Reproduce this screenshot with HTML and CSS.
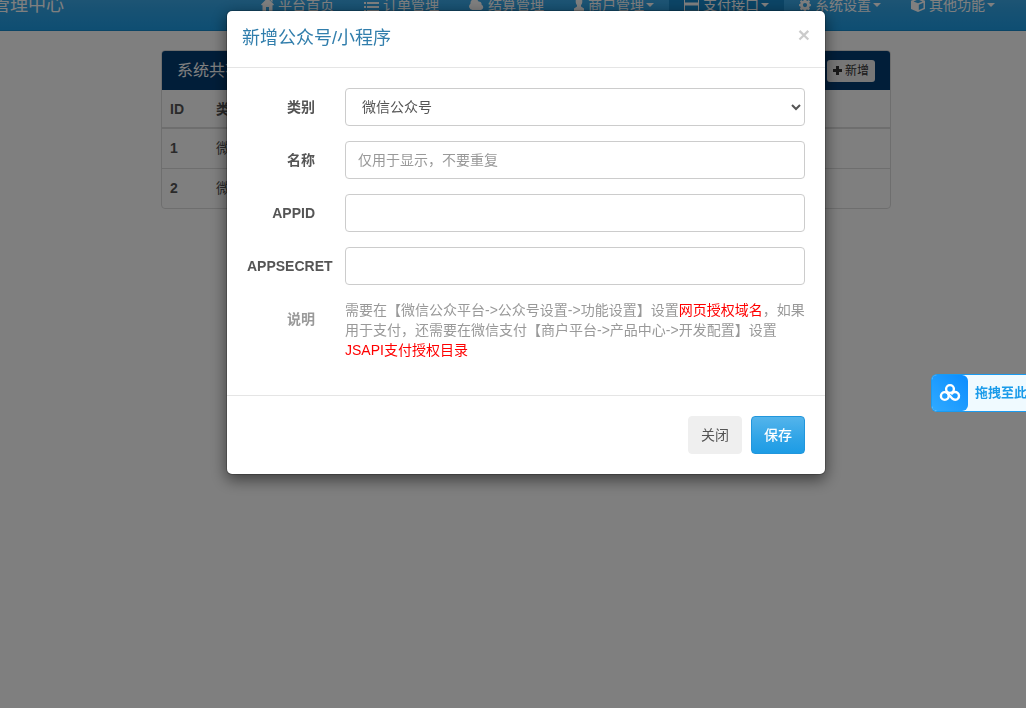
FILE: index.html
```html
<!DOCTYPE html>
<html lang="zh-CN">
<head>
<meta charset="utf-8">
<title>管理中心</title>
<link rel="stylesheet" href="styles.css">
</head>
<body>
<header class="navbar">
  <a class="brand" href="#">管理中心</a>
  <nav class="menu">
    <a href="#"><svg width="13" height="14" viewBox="0 0 13 14"><path d="M6.500 0 13 6.500 12 7.500 11.500 7V13H8V9H5v4H1.500V7L1 7.500 0 6.500ZM9.500 .5H11.500V4.500L9.500 2.500Z"/></svg>平台首页</a>
    <a href="#"><svg width="15" height="14" viewBox="0 0 15 14"><path d="M0 0h2v2H0zM3 0h12v2H3zM0 4h2v2H0zM3 4h12v2H3zM0 8h2v2H0zM3 8h12v2H3zM0 12h2v2H0zM3 12h12v2H3z"/></svg>订单管理</a>
    <a href="#"><svg width="15" height="14" viewBox="0 0 15 14"><path d="M3.500 12A3.500 3.500 0 0 1 1.500 5.700 4.200 4.200 0 0 1 9.500 3.500 2.800 2.800 0 0 1 12.600 6.700 2.800 2.800 0 0 1 12 12Z"/></svg>结算管理</a>
    <a href="#"><svg width="10" height="14" viewBox="0 0 10 14"><path d="M5 0a3.300 3.300 0 0 1 3.300 3.500c0 1.700-.6 3-1.300 3.700V8.500L10 10.500V13H0V10.500L3 8.500V7.200C2.300 6.500 1.700 5.200 1.700 3.500A3.300 3.300 0 0 1 5 0Z"/></svg>商户管理<span class="caret"></span></a>
    <a class="active" href="#"><svg width="15" height="14" viewBox="0 0 15 14"><path fill-rule="evenodd" d="M1 0h13l1 1v12l-1 1H1l-1-1V1ZM1 1.200V4.500h13V1.200ZM1 7.500v5.300h13V7.500Z"/></svg>支付接口<span class="caret"></span></a>
    <a href="#"><svg width="12" height="14" viewBox="0 0 12 14"><path fill-rule="evenodd" d="M5 1h2l.4 1.500 1 .4 1.400-.8 1.300 1.300-.8 1.400.4 1L12 6.200v1.900l-1.500.4-.4 1 .8 1.300-1.300 1.400-1.400-.8-1 .4L7 13.200H5l-.4-1.400-1-.4-1.400.8L.9 10.800l.8-1.300-.4-1L0 8.100V6.200l1.300-.4.4-1-.8-1.400 1.300-1.300 1.400.8 1-.4ZM6 5a2.100 2.100 0 1 0 0 4.200A2.100 2.100 0 0 0 6 5Z"/></svg>系统设置<span class="caret"></span></a>
    <a href="#"><svg width="14" height="14" viewBox="0 0 14 14"><path fill-rule="evenodd" d="M7 0 14 2.800V11L7 14 0 11V2.800ZM7 1.500 2.500 3.400 7 5.300l4.500-1.900ZM7.800 6.700V12l4.700-2.100V4.700Z"/></svg>其他功能<span class="caret"></span></a>
    <a href="#" aria-label="退出"><svg width="14" height="14" viewBox="0 0 14 14"><path d="M7 1a6 6 0 1 0 0 12A6 6 0 1 0 7 1Z"/></svg></a>
  </nav>
</header>

<main class="page">
  <section class="panel">
    <div class="panel-heading">
      <h3>系统共有</h3>
      <button type="button" class="add"><svg width="9" height="9" viewBox="0 0 9 9"><path d="M3 0h3v3h3v3H6v3H3V6H0V3h3Z"/></svg>新增</button>
    </div>
    <table class="list">
      <thead><tr><th class="id">ID</th><th>类别</th></tr></thead>
      <tbody>
        <tr><td class="id">1</td><td>微信</td></tr>
        <tr><td class="id">2</td><td>微信</td></tr>
      </tbody>
    </table>
  </section>
</main>

<div class="backdrop">
  <form class="modal" role="dialog" aria-labelledby="modal-title">
    <div class="modal-header">
      <h4 id="modal-title">新增公众号/小程序</h4>
      <button type="button" class="close" aria-label="关闭窗口">×</button>
    </div>
    <div class="modal-body">
      <div class="row">
        <label for="type">类别</label>
        <div class="field"><select id="type" class="control"><option>微信公众号</option></select></div>
      </div>
      <div class="row">
        <label for="name">名称</label>
        <div class="field"><input id="name" class="control" type="text" placeholder="仅用于显示，不要重复"></div>
      </div>
      <div class="row">
        <label for="appid">APPID</label>
        <div class="field"><input id="appid" class="control" type="text"></div>
      </div>
      <div class="row">
        <label for="secret">APPSECRET</label>
        <div class="field"><input id="secret" class="control" type="text"></div>
      </div>
      <div class="row muted">
        <span class="label">说明</span>
        <p class="field">需要在【微信公众平台-&gt;公众号设置-&gt;功能设置】设置<em>网页授权域名</em>，如果用于支付，还需要在微信支付【商户平台-&gt;产品中心-&gt;开发配置】设置<em>JSAPI支付授权目录</em></p>
      </div>
    </div>
    <div class="modal-footer">
      <button type="button" class="btn">关闭</button>
      <button type="submit" class="btn primary">保存</button>
    </div>
  </form>
</div>

<aside class="drop">
  <span class="drop-icon"><svg width="22" height="20" viewBox="0 0 22 20"><g fill="none" stroke="#fff" stroke-width="2.400" stroke-linecap="round"><circle cx="11" cy="6" r="3.900"/><circle cx="5.800" cy="13" r="3.900"/><path d="M8.500 10 13.400 15.700A3.900 3.900 0 1 0 13 10.500"/></g></svg></span>
  <span class="drop-text">拖拽至此上传</span>
</aside>
</body>
</html>
```
FILE: styles.css
```css
* { box-sizing: border-box; }
body {
  margin: 0;
  overflow: hidden;
  background: #fff;
  color: #555;
  font: 14px/20px "Liberation Sans", "Noto Sans CJK SC", sans-serif;
}
button, input, select { font: inherit; color: inherit; }
h3, h4, p { margin: 0; font-weight: 400; }

.navbar {
  display: flex;
  height: 51px;
  margin-top: -20px;
  background: linear-gradient(#54b4eb, #2fa4e7 60%, #1d9ce5);
  border-bottom: 1px solid #178acc;
}
.navbar a { color: #fff; text-decoration: none; white-space: nowrap; }
.brand {
  flex: none;
  width: 254px;
  margin-left: -8px;
  padding: 15px 0;
  font-size: 18px;
}
.menu { display: flex; }
.menu a { display: flex; align-items: center; padding: 0 15px; }
.menu svg { flex: none; margin-right: 4px; fill: #fff; }
.menu .active { background: #178acc; }
.caret {
  margin-left: 2px;
  border: 4px solid transparent;
  border-top-color: #fff;
  border-bottom: 0;
}

.page { padding: 19px 0 0 26px; }
.panel {
  width: 730px;
  max-width: 100%;
  margin: 0 auto;
  border: 1px solid #ddd;
  border-radius: 4px;
  overflow: hidden;
}
.panel-heading {
  display: flex;
  align-items: center;
  justify-content: space-between;
  height: 39px;
  padding: 0 15px;
  background: #033c73;
  color: #fff;
}
.panel-heading h3 { font-size: 16px; }
.add {
  display: flex;
  align-items: center;
  gap: 3px;
  padding: 1px 6px;
  border: 0;
  border-radius: 3px;
  background: #efefef;
  color: #333;
  font-size: 12px;
}
.add svg { fill: #333; }
.list { width: 100%; border-collapse: collapse; }
.list th, .list td { height: 40px; padding: 8px; text-align: left; border-top: 1px solid #ddd; }
.list th { height: 38px; border-top: 0; border-bottom: 2px solid #ddd; }
.list .id { width: 46px; font-weight: 700; }

.backdrop {
  position: fixed;
  inset: 0;
  padding: 10px 0 0 26px;
  background: rgba(0, 0, 0, .5);
}
.modal {
  width: 600px;
  max-width: 100%;
  margin: 0 auto;
  border: 1px solid rgba(0, 0, 0, .2);
  border-radius: 6px;
  background: #fff;
  background-clip: padding-box;
  box-shadow: 0 5px 15px rgba(0, 0, 0, .5);
}
.modal-header {
  display: flex;
  justify-content: space-between;
  padding: 14px 15px 16px;
  border-bottom: 1px solid #e5e5e5;
}
.modal-header h4 { color: #317eac; font-size: 18px; line-height: 26px; }
.close {
  height: 20px;
  padding: 0;
  border: 0;
  background: none;
  color: #000;
  font-size: 21px;
  font-weight: 700;
  opacity: .2;
}
.modal-body { padding: 20px 5px; }
.row { display: grid; grid-template-columns: 98px 1fr; margin-bottom: 15px; }
.row label, .label {
  display: flex;
  justify-content: flex-end;
  padding: 9px 15px 0;
  font-weight: 700;
}
.row label[for="secret"] { justify-content: flex-start; }
.field { padding: 0 15px; }
.control {
  display: block;
  width: 100%;
  height: 38px;
  padding: 8px 12px;
  border: 1px solid #ccc;
  border-radius: 4px;
  background: #fff;
}
.control::placeholder { color: #999; opacity: 1; }
.muted { color: #999; }
.muted em { color: #f00; font-style: normal; }
.modal-footer {
  display: flex;
  justify-content: flex-end;
  gap: 9px;
  padding: 20px;
  border-top: 1px solid #e5e5e5;
}
.btn {
  height: 38px;
  padding: 0 12px;
  border: 1px solid #efefef;
  border-radius: 4px;
  background: #efefef;
}
.btn.primary {
  border-color: #2196dc;
  background: linear-gradient(#54b4eb, #2fa4e7 60%, #1d9ce5);
  color: #fff;
  font-weight: 500;
}

.drop {
  position: fixed;
  top: 374px;
  right: 0;
  display: flex;
  align-items: center;
  width: 95px;
  height: 38px;
  overflow: hidden;
  border: 1px solid #1a9bf0;
  border-right: 0;
  border-radius: 6px 0 0 6px;
  background: #f0faff;
  white-space: nowrap;
}
.drop-icon {
  display: grid;
  place-items: center;
  flex: none;
  width: 36px;
  height: 36px;
  margin-right: 7px;
  border-radius: 0 6px 6px 0;
  background: linear-gradient(45deg, #30aaff, #0a8cff);
}
.drop-text { color: #1a9bea; font-size: 13px; font-weight: 700; }
```
